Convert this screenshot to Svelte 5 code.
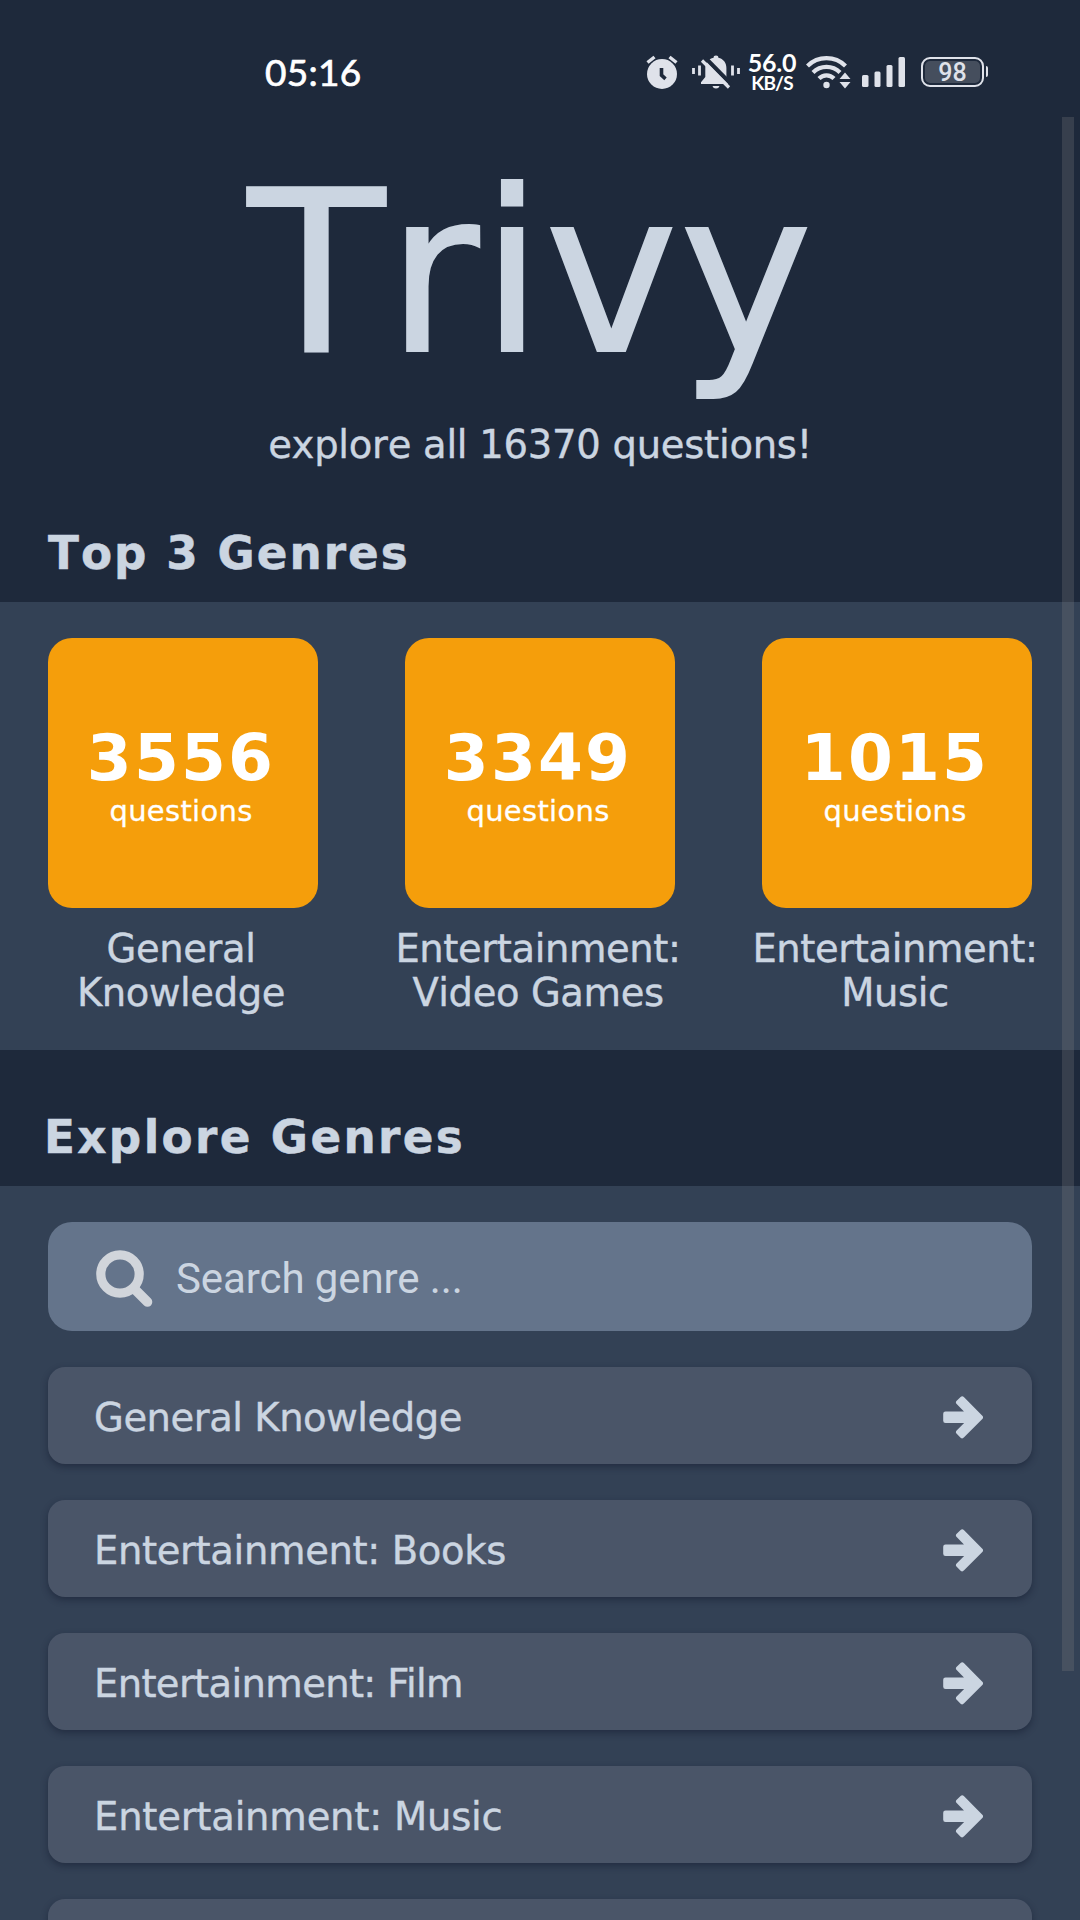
<script lang="ts">
    interface Genre {
        name: string;
        spacing?: number;
    }

    const total = 16370;

    const topGenres = [
        { count: 3556, lines: ["General", "Knowledge"] },
        { count: 3349, lines: ["Entertainment:", "Video Games"] },
        { count: 1015, lines: ["Entertainment:", "Music"] },
    ];

    const genres: Genre[] = [
        { name: "General Knowledge" },
        { name: "Entertainment: Books", spacing: -0.35 },
        { name: "Entertainment: Film", spacing: -0.65 },
        { name: "Entertainment: Music", spacing: -0.2 },
    ];

    let search = $state("");

    const visible = $derived(
        genres.filter((g) => g.name.toLowerCase().includes(search.toLowerCase())),
    );
</script>

<div class="screen">
    <header class="status">
        <span class="time">05:16</span>
        <div class="status-icons">
            <svg class="alarm" width="32" height="36" viewBox="0 0 32 36">
                <circle cx="16" cy="20" r="15" fill="#dfe2ea" />
                <path d="M1.5 8.5 8.5 3M30.5 8.5 23.5 3" stroke="#dfe2ea" stroke-width="3.4" />
                <path d="M15.5 14v7.2l4 3.6" fill="none" stroke="#1e293b" stroke-width="3.6" />
            </svg>
            <svg class="bell" width="48" height="36" viewBox="0 0 48 36">
                <path
                    d="M24 1.5c1.6 0 2.4.9 2.4 2.2 5 1.2 8 5 8 10.2v9l4.6 5.4v1.7H9v-1.7l4.3-5.4v-9c0-5.2 3.2-9 8.3-10.2 0-1.3.8-2.2 2.4-2.2zM20.500 32h7c-.5 1.7-1.8 2.5-3.5 2.5s-3-.8-3.5-2.5z"
                    fill="#dfe2ea"
                />
                <path d="M13 3.5 40 31" stroke="#1e293b" stroke-width="4" />
                <path d="M10 6.5 37 33.5" stroke="#dfe2ea" stroke-width="3.2" />
                <path d="M1.5 14v6M7.5 11.5v10M40.5 11.5v10M46.5 14v6" stroke="#dfe2ea" stroke-width="2.8" />
            </svg>
            <div class="speed">
                <span class="speed-value">56.0</span>
                <span class="speed-unit">KB/S</span>
            </div>
            <svg class="wifi" width="46" height="36" viewBox="0 0 46 36">
                <g fill="none" stroke="#dfe2ea" stroke-width="4.2">
                    <path d="M1.5 12a27 27 0 0 1 38 0" />
                    <path d="M7 18.500a19 19 0 0 1 27 0" />
                    <path d="M13 24.500a10.500 10.500 0 0 1 15 0" />
                </g>
                <circle cx="20.500" cy="31" r="3.2" fill="#dfe2ea" />
                <path d="M33.5 25 39 18.5l5.500 6.500zM33.500 28 39 34.500l5.500-6.500z" fill="#dfe2ea" />
            </svg>
            <svg class="signal" width="44" height="36" viewBox="0 0 44 36" fill="#dfe2ea">
                <rect x="0" y="21" width="6.5" height="12" rx="1.5" />
                <rect x="12.5" y="17.5" width="6" height="15.5" rx="1.5" />
                <rect x="24.5" y="11" width="6" height="22" rx="1.5" />
                <rect x="36.5" y="3" width="6.5" height="30" rx="1.5" />
            </svg>
            <div class="battery">98</div>
        </div>
    </header>

    <section class="hero">
        <h1>Trivy</h1>
        <p>explore all {total} questions!</p>
    </section>

    <h2>Top 3 Genres</h2>
    <section class="panel top">
        {#each topGenres as genre}
            <article>
                <div class="card">
                    <strong>{genre.count}</strong>
                    <span>questions</span>
                </div>
                <p class="label">
                    {#each genre.lines as line}
                        <span>{line}</span>
                    {/each}
                </p>
            </article>
        {/each}
    </section>

    <h2 class="explore">Explore Genres</h2>
    <section class="panel list">
        <label class="search">
            <svg width="57" height="57" viewBox="0 0 57 57" fill="none" stroke="#d1d5db">
                <circle cx="24" cy="24" r="19.2" stroke-width="9.2" />
                <path d="M38 38.5 51.5 52" stroke-width="9.6" stroke-linecap="round" />
            </svg>
            <input bind:value={search} placeholder="Search genre ..." />
        </label>
        {#each visible as genre}
            <button class="row">
                <span style:letter-spacing="{genre.spacing ?? -0.45}px">{genre.name}</span>
                <svg width="40" height="43" viewBox="0 0 40 43">
                    <path
                        d="M2.5 17.8H26.500L15.300 6.500 19.200 2.700 37.700 21.300 19.200 40 15.300 36.200 26.500 24.800H2.500z"
                        fill="#cbd5e1"
                        stroke="#cbd5e1"
                        stroke-width="4.6"
                        stroke-linejoin="round"
                    />
                </svg>
            </button>
        {/each}
        <div class="row"></div>
    </section>

    <div class="scrollbar"></div>
</div>

<style>
    :global(body) {
        background: #1e293b;
        overflow: hidden;
    }

    .screen {
        position: relative;
        width: 1080px;
        height: 1920px;
        overflow: hidden;
        background: #1e293b;
        color: #cbd5e1;
        font-family: "DejaVu Sans", sans-serif;
        font-kerning: none;
    }

    .status {
        display: flex;
        justify-content: space-between;
        box-sizing: border-box;
        height: 117px;
        padding: 54px 92px 0 265px;
        color: #ffffff;
    }

    .time {
        margin-top: -1px;
        font-family: Lato, sans-serif;
        font-size: 37px;
        line-height: 37px;
        letter-spacing: 0.3px;
        -webkit-text-stroke: 0.7px #ffffff;
    }

    .status-icons {
        display: flex;
        height: 36px;
        margin-left: -1px;
    }

    .status-icons svg {
        flex-shrink: 0;
    }

    .bell {
        margin-left: 14px;
    }

    .speed {
        display: flex;
        flex-direction: column;
        align-items: center;
        width: 52px;
        margin: -2px 0 0 6px;
        font-family: Lato, sans-serif;
        font-weight: 700;
    }

    .speed-value {
        font-size: 25px;
        line-height: 21px;
        letter-spacing: -0.2px;
    }

    .speed-unit {
        font-size: 19px;
        line-height: 19px;
        letter-spacing: -0.8px;
    }

    .wifi {
        margin-left: 8px;
    }

    .signal {
        margin-left: 10px;
    }

    .battery {
        position: relative;
        box-sizing: border-box;
        width: 63px;
        height: 30px;
        margin: 3px 4px 0 15px;
        border: 2.5px solid #dfe2ea;
        border-radius: 9px;
        box-shadow: inset 0 0 0 2px #1e293b;
        background: #454e5d;
        color: #dfe2ea;
        font-family: Roboto, sans-serif;
        font-size: 25px;
        font-weight: 500;
        line-height: 27px;
        text-align: center;
    }

    .battery::after {
        content: "";
        position: absolute;
        top: 7px;
        right: -6px;
        width: 2.5px;
        height: 11px;
        border-radius: 0 2px 2px 0;
        background: #dfe2ea;
    }

    .hero {
        padding-top: 44px;
        text-align: center;
    }

    h1 {
        margin: 0;
        padding-right: 18px;
        font-size: 225px;
        font-weight: 400;
        line-height: 225px;
        letter-spacing: 1.5px;
        -webkit-text-stroke: 2px #cbd5e1;
    }

    .hero p {
        margin: 37px 0 0;
        font-size: 38.5px;
        line-height: 44px;
        letter-spacing: -0.25px;
        -webkit-text-stroke: 0.4px #cbd5e1;
    }

    h2 {
        margin: 0;
        padding: 60px 48px 21px;
        font-size: 45.3px;
        line-height: 54px;
        letter-spacing: 2px;
        -webkit-text-stroke: 0.5px #cbd5e1;
    }

    .explore {
        padding-top: 61px;
        padding-left: 44px;
        letter-spacing: 2.35px;
    }

    .panel {
        background: #334155;
    }

    .top {
        display: flex;
        justify-content: space-between;
        padding: 36px 48px 35px;
    }

    article {
        width: 270px;
    }

    .card {
        display: flex;
        flex-direction: column;
        align-items: center;
        justify-content: center;
        gap: 3px;
        box-sizing: border-box;
        height: 270px;
        padding: 8px 4px 0 0;
        border-radius: 24px;
        background: #f59e0b;
        color: #ffffff;
    }

    .card strong {
        font-size: 64.5px;
        line-height: 64px;
        letter-spacing: 2.2px;
    }

    .card span {
        font-size: 29px;
        line-height: 36px;
        letter-spacing: 0.3px;
        -webkit-text-stroke: 0.3px #ffffff;
    }

    .label {
        display: flex;
        flex-direction: column;
        margin: 19px -13px 0 -17px;
        font-size: 38.5px;
        line-height: 44px;
        letter-spacing: -0.4px;
        text-align: center;
        white-space: nowrap;
        -webkit-text-stroke: 0.4px #cbd5e1;
    }

    .list {
        display: flex;
        flex-direction: column;
        gap: 36px;
        padding: 36px 48px;
    }

    .search {
        display: flex;
        align-items: center;
        gap: 23px;
        box-sizing: border-box;
        height: 109px;
        padding: 3px 48px 0 48px;
        border-radius: 24px;
        background: #64748b;
    }

    .search input {
        flex: 1;
        padding: 0;
        border: 0;
        outline: 0;
        background: none;
        color: #cbd5e1;
        font-family: Roboto, sans-serif;
        font-size: 42px;
        letter-spacing: -0.1px;
    }

    .search input::placeholder {
        color: #cbd5e1;
        opacity: 1;
    }

    .row {
        display: flex;
        align-items: center;
        justify-content: space-between;
        box-sizing: border-box;
        width: 100%;
        height: 97px;
        flex-shrink: 0;
        padding: 4px 49px 0 46px;
        border: 0;
        border-radius: 17px;
        background: #4a5568;
        box-shadow: 0 3px 7px rgba(15, 23, 42, 0.45);
        color: inherit;
        font-family: inherit;
        font-size: 38.5px;
        line-height: 44px;
        -webkit-text-stroke: 0.4px #cbd5e1;
    }

    .scrollbar {
        position: absolute;
        top: 117px;
        right: 6px;
        width: 12px;
        height: 1554px;
        background: rgba(127, 127, 127, 0.27);
    }
</style>
